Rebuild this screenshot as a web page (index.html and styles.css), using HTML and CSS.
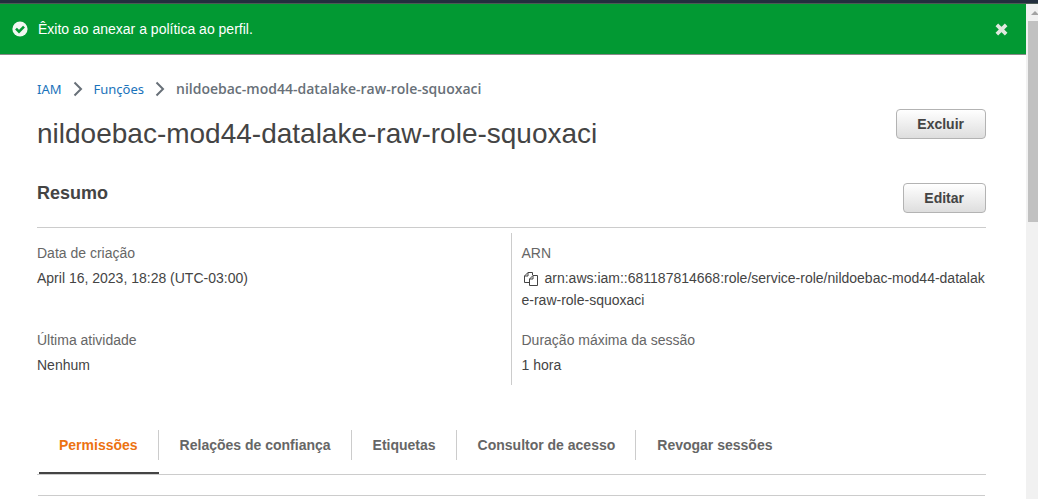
FILE: index.html
```html
<!DOCTYPE html>
<html lang="pt-BR">
<head>
<meta charset="utf-8">
<title>IAM - Funções</title>
<link rel="stylesheet" href="styles.css">
</head>
<body>
<div class="topbar"></div>
<div class="viewport">
  <div class="page">
    <div class="banner" role="status">
      <svg class="banner-icon" viewBox="0 0 16 16" aria-hidden="true"><circle cx="8" cy="8" r="7.6" fill="#f2f7f2"/><path d="M4 7.600l3 3 5-5" fill="none" stroke="#029933" stroke-width="2.600"/></svg>
      <span class="banner-text">Êxito ao anexar a política ao perfil.</span>
      <button class="close" type="button" aria-label="Fechar"><svg viewBox="0 0 12 12" aria-hidden="true"><path d="M1.700 1.700l8.600 8.600M10.300 1.700l-8.600 8.600" fill="none" stroke="#e0e8e0" stroke-width="3.400"/></svg></button>
    </div>
    <main class="content">
      <nav class="crumbs" aria-label="Navegação">
        <a href="#">IAM</a>
        <svg class="chevron" viewBox="0 0 10 16" aria-hidden="true"><path d="M1.5 1.5L8 8l-6.500 6.500"/></svg>
        <a href="#">Funções</a>
        <svg class="chevron" viewBox="0 0 10 16" aria-hidden="true"><path d="M1.5 1.5L8 8l-6.500 6.500"/></svg>
        <span class="current">nildoebac-mod44-datalake-raw-role-squoxaci</span>
      </nav>
      <header class="title-row">
        <h1>nildoebac-mod44-datalake-raw-role-squoxaci</h1>
        <button class="btn" type="button">Excluir</button>
      </header>
      <section class="summary">
        <div class="summary-head">
          <h2>Resumo</h2>
          <button class="btn" type="button">Editar</button>
        </div>
        <div class="summary-grid">
          <dl class="col">
            <dt>Data de criação</dt>
            <dd class="tall">April 16, 2023, 18:28 (UTC-03:00)</dd>
            <dt>Última atividade</dt>
            <dd>Nenhum</dd>
          </dl>
          <dl class="col">
            <dt>ARN</dt>
            <dd class="tall"><button class="copy" type="button" aria-label="Copiar ARN"><svg viewBox="0 0 16 16" aria-hidden="true"><path d="M6.500 11.500h-5V5l3.500-3.500h4.500V4M5 1.500V5H1.500M6.500 14.500V8L10 4.500h4.500v10zM10 4.500V8H6.500"/></svg></button>arn:aws:iam::681187814668:role/service-role/nildoebac-mod44-datalake-raw-role-squoxaci</dd>
            <dt>Duração máxima da sessão</dt>
            <dd>1 hora</dd>
          </dl>
        </div>
      </section>
      <div class="tabs" role="tablist">
        <button class="tab active" type="button" role="tab" aria-selected="true"><span>Permissões</span></button>
        <button class="tab" type="button" role="tab"><span>Relações de confiança</span></button>
        <button class="tab" type="button" role="tab"><span>Etiquetas</span></button>
        <button class="tab" type="button" role="tab"><span>Consultor de acesso</span></button>
        <button class="tab" type="button" role="tab"><span>Revogar sessões</span></button>
      </div>
      <div class="panel"></div>
    </main>
  </div>
  <div class="scrollbar" aria-hidden="true">
    <svg class="arrow" viewBox="0 0 8 4"><path d="M0 4l4-4 4 4z" fill="#a3a3a3"/></svg>
    <div class="thumb"></div>
  </div>
</div>
</body>
</html>
```
FILE: styles.css
```css
* { box-sizing: border-box; }
body {
  margin: 0;
  height: 100vh;
  overflow: hidden;
  display: flex;
  flex-direction: column;
  background: #fff;
  color: #444;
  font: 14px/22px "Liberation Sans", Arial, sans-serif;
}
button { font: inherit; color: inherit; cursor: pointer; }
.topbar { flex: none; height: 4px; background: #232f3e; border-bottom: 1px solid #4c5a55; }
.viewport { flex: 1; min-height: 0; display: flex; }
.page { flex: 1; min-width: 0; overflow: hidden; }
.banner {
  display: flex;
  align-items: center;
  height: 51px;
  padding: 0 18px 0 12px;
  background: #029933;
  border-bottom: 1px solid #888;
  color: #fff;
}
.banner-icon { width: 16px; height: 16px; margin-right: 10px; }
.banner-text { flex: 1; }
.close { display: flex; padding: 0; border: 0; background: none; }
.close svg { width: 13px; height: 13px; }
.content { padding: 23px 40px 0 37px; }
.crumbs {
  display: flex;
  align-items: center;
  gap: 11px;
  font: 13px/22px "Noto Sans", sans-serif;
}
.crumbs a { color: #1a73bb; text-decoration: none; }
.crumbs .current { color: #687078; font: 600 14px/22px "Open Sans", sans-serif; }
.chevron { width: 10px; height: 16px; fill: none; stroke: #687078; stroke-width: 2; }
.title-row { display: flex; justify-content: space-between; align-items: flex-start; margin-top: 9px; }
h1 { margin: 8px 0 0; font-size: 28px; line-height: 34px; font-weight: 400; }
.btn {
  height: 30px;
  padding: 0 21px 0 20px;
  border: 1px solid #b3b3b3;
  border-radius: 4px;
  background: linear-gradient(#fff, #dedede);
  font-weight: 700;
}
.summary-head {
  display: flex;
  justify-content: space-between;
  align-items: flex-start;
  height: 45px;
  margin-top: 32px;
  border-bottom: 1px solid #ccc;
}
h2 { margin: 0; font-size: 18px; line-height: 20px; }
.summary-grid { display: grid; grid-template-columns: minmax(0, 1fr) calc(50% + 1px); padding-top: 5px; }
.col { margin: 0; padding: 9px 0; height: 152px; }
.col + .col { border-left: 1px solid #ccc; padding-left: 10px; }
dt { color: #666; }
dd { margin: 3px 0 0; word-break: break-all; }
dd.tall { min-height: 62px; }
.copy { padding: 0; border: 0; background: none; margin: 0 6px 0 1px; vertical-align: middle; }
.copy svg { display: block; width: 16px; height: 16px; fill: none; stroke: #444; stroke-width: 1; }
.tabs { display: flex; margin-top: 45px; padding-left: 2px; border-bottom: 1px solid #ccc; }
.tab {
  height: 44px;
  padding: 0 0 14px;
  border: 0;
  background: none;
  color: #666;
  font-weight: 700;
}
.tab span { display: block; padding: 0 20px; line-height: 30px; border-right: 1px solid #ccc; }
.tab + .tab span { padding-left: 21px; }
.tab:last-child span { border-right: 0; }
.tab.active { color: #ec7211; padding-bottom: 12px; border-bottom: 2px solid #444; }
.panel { margin: 20px 1px 0; border-top: 1px solid #ccc; }
.scrollbar { flex: none; width: 12px; background: #f1f1f1; overflow: hidden; }
.arrow { display: block; width: 8px; height: 4px; margin: 7px 0 6px 5px; }
.thumb { height: 201px; margin-left: 2px; background: #c1c1c1; }
```
